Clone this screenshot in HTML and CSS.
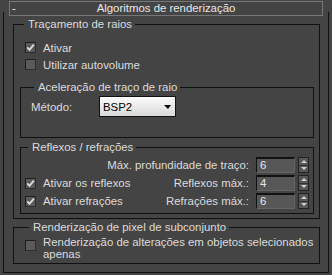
FILE: index.html
```html
<!DOCTYPE html>
<html lang="pt">
<head>
    <meta charset="UTF-8">
    <meta name="viewport" content="width=device-width, initial-scale=1.0">
    <title>Algoritmos de renderização</title>
    <link rel="stylesheet" href="styles.css">
</head>
<body>

    <div class="rollout">
        <div class="rollout-head">
            <span class="toggle">-</span>
            <span class="head-title">Algoritmos de renderização</span>
            <span></span>
        </div>

        <fieldset class="group raytrace">
            <legend>Traçamento de raios</legend>

            <label class="check">
                <span class="box"><svg width="9" height="9" viewBox="0 0 9 9"><path d="M1.3 4.4 L3.5 6.8 L7.8 1.6" fill="none" stroke="#dedede" stroke-width="1.8"/></svg></span>
                Ativar
            </label>
            <label class="check">
                <span class="box"></span>
                Utilizar autovolume
            </label>

            <fieldset class="group sub accel">
                <legend>Aceleração de traço de raio</legend>
                <div class="method-row">
                    <span class="method-label">Método:</span>
                    <div class="select">BSP2<span class="arrow"></span></div>
                </div>
            </fieldset>

            <fieldset class="group sub reflect">
                <legend>Reflexos / refrações</legend>

                <div class="spin-grid">
                    <span></span>
                    <span class="spin-label">Máx. profundidade de traço:</span>
                    <span class="num">6</span>
                    <span class="spin"><span class="up"></span><span class="down"></span></span>

                    <label class="check flat">
                        <span class="box"><svg width="9" height="9" viewBox="0 0 9 9"><path d="M1.3 4.4 L3.5 6.8 L7.8 1.6" fill="none" stroke="#dedede" stroke-width="1.8"/></svg></span>
                        Ativar os reflexos
                    </label>
                    <span class="spin-label">Reflexos máx.:</span>
                    <span class="num">4</span>
                    <span class="spin"><span class="up"></span><span class="down"></span></span>

                    <label class="check flat">
                        <span class="box"><svg width="9" height="9" viewBox="0 0 9 9"><path d="M1.3 4.4 L3.5 6.8 L7.8 1.6" fill="none" stroke="#dedede" stroke-width="1.8"/></svg></span>
                        Ativar refrações
                    </label>
                    <span class="spin-label">Refrações máx.:</span>
                    <span class="num">6</span>
                    <span class="spin"><span class="up"></span><span class="down"></span></span>
                </div>
            </fieldset>
        </fieldset>

        <fieldset class="group subset">
            <legend>Renderização de pixel de subconjunto</legend>
            <label class="check wrap">
                <span class="box"></span>
                <span class="wrap-text">Renderização de alterações em objetos selecionados apenas</span>
            </label>
        </fieldset>
    </div>

</body>
</html>
```

FILE: styles.css
```css
body {
    margin: 0;
    background: #444;
    color: #dcdcdc;
    font-family: "Liberation Sans", Arial, sans-serif;
    font-size: 11.4px;
}

.rollout {
    display: flex;
    flex-direction: column;
    margin: 12px 3px 0;
    border: 1px solid #111;
    border-top: none;
}

.rollout-head {
    display: grid;
    grid-template-columns: 14px 1fr 14px;
    align-items: center;
    height: 15px;
    box-sizing: border-box;
    margin: -11px 5px 0;
    border: 1px solid #777;
    color: #e8e8e8;
    line-height: 13px;
}

.toggle {
    padding-left: 2px;
}

.head-title {
    text-align: center;
}

/* group boxes */
.group {
    margin: 0;
    padding: 0;
    min-width: 0;
    border: 1px solid #111;
}

.group legend {
    margin-left: 4px;
    padding: 0 3px 0 4px;
    line-height: 14px;
}

.raytrace {
    margin: 1px 8px 0 9px;
    padding: 8px 5px 4px 6px;
}

.sub legend {
    margin-left: 3px;
}

.accel {
    margin-top: 7px;
    padding: 2px 0 20px 10px;
}

.reflect {
    margin-top: 2px;
    padding: 3px 4px 4px 4px;
}

.subset {
    margin: 1px 8px 8px 9px;
    padding: 2px 0 3px 11px;
}

/* checkboxes */
.check {
    display: flex;
    align-items: center;
    height: 17px;
    padding-left: 5px;
    gap: 7px;
    white-space: nowrap;
}

.check.flat {
    height: 16px;
    padding-left: 0;
}

.check.wrap {
    height: auto;
    padding-left: 0;
    align-items: flex-start;
    line-height: 12px;
    white-space: normal;
}

.check.wrap .box {
    margin-top: 4px;
}

.box {
    display: flex;
    align-items: center;
    justify-content: center;
    flex: none;
    width: 11px;
    height: 11px;
    box-sizing: border-box;
    background: #5a5a5a;
    border: 1px solid #1e1e1e;
    border-right-color: #2e2e2e;
    border-bottom-color: #2e2e2e;
}

/* method dropdown */
.method-row {
    display: flex;
    align-items: center;
}

.method-label {
    width: 68px;
}

.select {
    display: flex;
    align-items: center;
    justify-content: space-between;
    width: 77px;
    height: 21px;
    box-sizing: border-box;
    padding-left: 3px;
    border: 1px solid #111;
    background: linear-gradient(#fbfbfb, #d9d9d9);
    color: #000;
}

.arrow {
    margin-right: 4px;
    border-top: 4px solid #000;
    border-left: 4px solid transparent;
    border-right: 3px solid transparent;
}

/* spinners */
.spin-grid {
    display: grid;
    grid-template-columns: minmax(0, 1fr) auto 39px 14px;
    grid-auto-rows: 16px;
    row-gap: 2px;
    align-items: center;
}

.spin-label {
    text-align: right;
    margin-right: 7px;
    white-space: nowrap;
}

.num {
    height: 16px;
    box-sizing: border-box;
    padding-left: 3px;
    background: #575757;
    border-top: 2px solid #111;
    border-left: 1px solid #111;
    border-right: 1px solid #666;
    border-bottom: 1px solid #666;
    color: #e6e6e6;
    line-height: 13px;
}

.spin {
    display: flex;
    flex-direction: column;
    height: 16px;
    margin-left: 3px;
    box-sizing: border-box;
    border: 1px solid #222;
    background: #575757;
}

.spin .up, .spin .down {
    flex: 1;
    display: flex;
    align-items: center;
    justify-content: center;
}

.spin .up {
    border-bottom: 1px solid #333;
}

.spin .up::after {
    content: "";
    border-bottom: 3px solid #cfcfcf;
    border-left: 3px solid transparent;
    border-right: 3px solid transparent;
}

.spin .down::after {
    content: "";
    border-top: 3px solid #cfcfcf;
    border-left: 3px solid transparent;
    border-right: 3px solid transparent;
}
```
